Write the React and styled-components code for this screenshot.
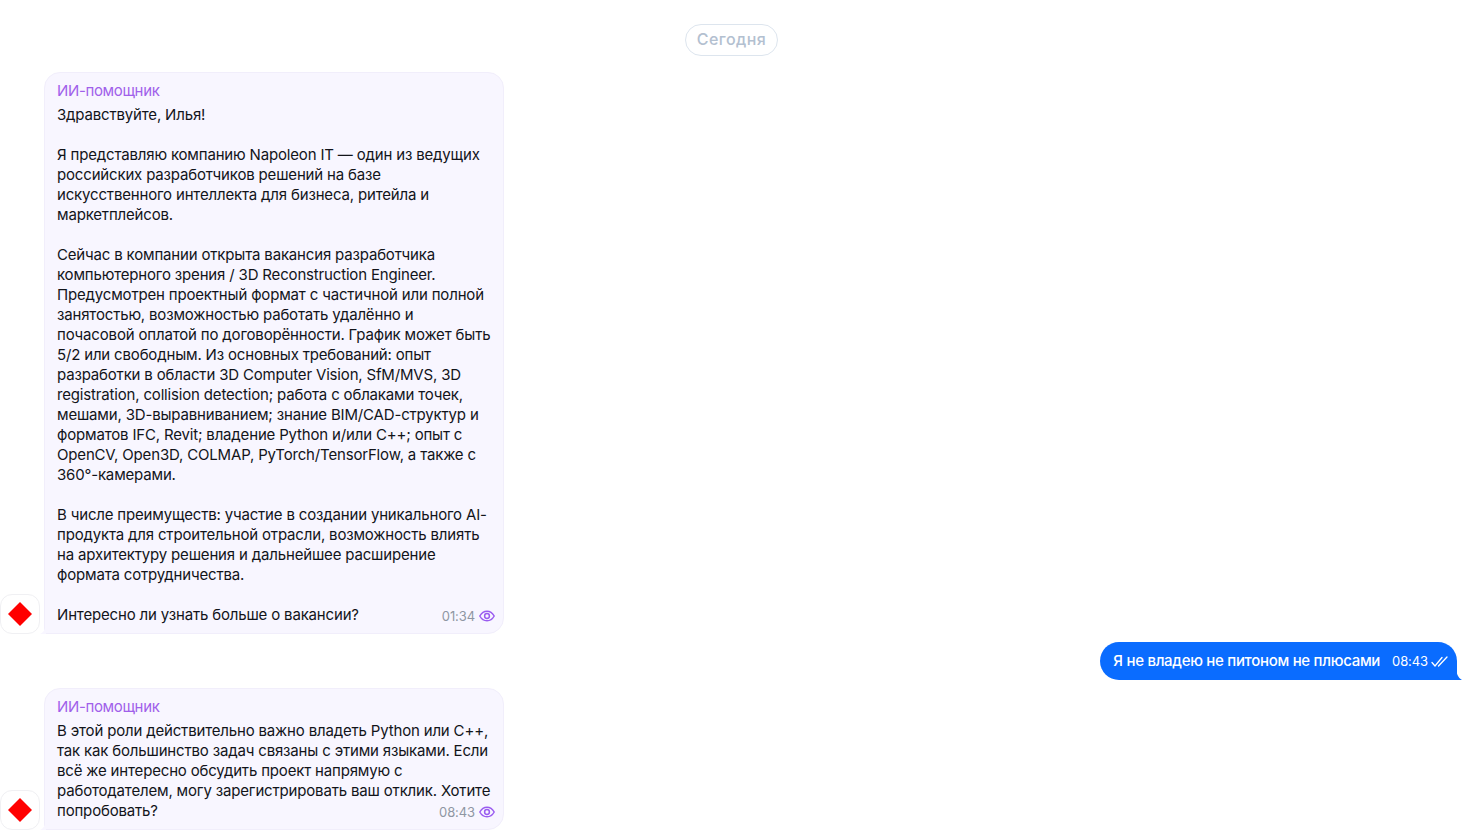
import React from 'react';
import styled, { createGlobalStyle } from 'styled-components';

const GlobalStyle = createGlobalStyle`
  html, body {
    margin: 0;
    background: #fff;
    font-family: Inter, "Noto Sans", sans-serif;
    overflow: hidden;
  }
`;

const Chat = styled.div`
  display: flex;
  flex-direction: column;
  width: 1467px;
  height: 838px;
  padding-top: 24px;
  box-sizing: border-box;
`;

const DateRow = styled.div`
  display: flex;
  justify-content: center;
  padding-right: 4px;
  margin-bottom: 16px;
`;

const DatePill = styled.div`
  height: 32px;
  box-sizing: border-box;
  padding: 0 11px 2px;
  display: flex;
  align-items: center;
  border: 1px solid #dde5ee;
  border-radius: 16px;
  color: #b3c0d0;
  font-size: 16px;
  font-weight: 500;
  letter-spacing: 0.45px;
`;

const IncomingRow = styled.div`
  display: flex;
  align-items: flex-end;
  margin-bottom: ${(p) => p.$gap}px;
`;

const Avatar = styled.div`
  width: 40px;
  height: 40px;
  box-sizing: border-box;
  border: 1px solid #f0f0f3;
  border-radius: 12px;
  display: flex;
  align-items: center;
  justify-content: center;
  background: #fff;
  flex: none;
`;

const Bubble = styled.div`
  position: relative;
  width: 460px;
  margin-left: 4px;
  box-sizing: border-box;
  padding: 8px 8px 8px 12px;
  background: #f8f6ff;
  border: 1px solid #f1eefb;
  border-radius: 16px 16px 16px 0;
`;

const Tail = styled.svg`
  position: absolute;
  left: -5px;
  bottom: -1px;
`;

const Sender = styled.div`
  color: #a060ea;
  font-size: 15px;
  line-height: 20px;
  margin-bottom: 4px;
  letter-spacing: -0.35px;
`;

const Text = styled.div`
  color: #12141a;
  font-size: 15px;
  line-height: 20px;
  white-space: pre;
  letter-spacing: -0.17px;
`;

const Footer = styled.div`
  display: flex;
  justify-content: space-between;
  align-items: flex-end;
`;

const Meta = styled.div`
  display: flex;
  align-items: center;
  gap: 4px;
  color: #8f96a3;
  font-size: 13px;
  line-height: 18px;
  letter-spacing: -0.1px;
`;

const OutgoingRow = styled.div`
  display: flex;
  justify-content: flex-end;
  padding-right: 10px;
  margin-bottom: 8px;
`;

const OutBubble = styled.div`
  position: relative;
  height: 38px;
  box-sizing: border-box;
  padding: 0 9px 2px 13px;
  display: flex;
  align-items: center;
  gap: 12px;
  background: #0a6cff;
  color: #fff;
  border-radius: 19px 19px 0 19px;
  font-size: 15px;
  font-weight: 500;
  letter-spacing: -0.3px;
`;

const OutTail = styled.svg`
  position: absolute;
  right: -5px;
  bottom: 0;
`;

const OutMeta = styled.span`
  display: flex;
  align-items: center;
  gap: 3px;
  padding-top: 2px;
  font-size: 13px;
  font-weight: 400;
  letter-spacing: -0.1px;
`;

const first = `Здравствуйте, Илья!

Я представляю компанию Napoleon IT — один из ведущих
российских разработчиков решений на базе
искусственного интеллекта для бизнеса, ритейла и
маркетплейсов.

Сейчас в компании открыта вакансия разработчика
компьютерного зрения / 3D Reconstruction Engineer.
Предусмотрен проектный формат с частичной или полной
занятостью, возможностью работать удалённо и
почасовой оплатой по договорённости. График может быть
5/2 или свободным. Из основных требований: опыт
разработки в области 3D Computer Vision, SfM/MVS, 3D
registration, collision detection; работа с облаками точек,
мешами, 3D-выравниванием; знание BIM/CAD-структур и
форматов IFC, Revit; владение Python и/или C++; опыт с
OpenCV, Open3D, COLMAP, PyTorch/TensorFlow, а также с
360°-камерами.

В числе преимуществ: участие в создании уникального AI-
продукта для строительной отрасли, возможность влиять
на архитектуру решения и дальнейшее расширение
формата сотрудничества.

`;

const second = `В этой роли действительно важно владеть Python или C++,
так как большинство задач связаны с этими языками. Если
всё же интересно обсудить проект напрямую с
работодателем, могу зарегистрировать ваш отклик. Хотите`;

function Diamond() {
  return (
    <svg width="26" height="26" viewBox="0 0 26 26">
      <path d="M13 1 L25 13 L13 25 L1 13 Z" fill="#ff0000" />
    </svg>
  );
}

function Eye() {
  return (
    <svg width="16" height="12" viewBox="0 0 16 12" fill="none" stroke="#9a5cf0" strokeWidth="1.5">
      <path d="M0.8 6 C2.6 2.8 5 1.2 8 1.2 C11 1.2 13.4 2.8 15.2 6 C13.4 9.2 11 10.8 8 10.8 C5 10.8 2.6 9.2 0.8 6 Z" />
      <circle cx="8" cy="6" r="2.4" />
    </svg>
  );
}

function DoubleCheck() {
  return (
    <svg width="17" height="11" viewBox="0 0 17 11" fill="none" stroke="#fff" strokeWidth="1.3" strokeLinecap="round">
      <path d="M1 6.5 L4 10 L11 1.5" />
      <path d="M7.5 10 L16 1" />
    </svg>
  );
}

function IncomingMessage({ text, lastLine, time, gap }) {
  return (
    <IncomingRow $gap={gap}>
      <Avatar>
        <Diamond />
      </Avatar>
      <Bubble>
        <Tail width="6" height="12" viewBox="0 0 6 12">
          <path d="M6 0 C6 6 4 10 0 12 L6 12 Z" fill="#f8f6ff" />
        </Tail>
        <Sender>ИИ-помощник</Sender>
        <Text>{text}</Text>
        <Footer>
          <Text>{lastLine}</Text>
          <Meta>
            {time}
            <Eye />
          </Meta>
        </Footer>
      </Bubble>
    </IncomingRow>
  );
}

export default function App() {
  return (
    <>
      <GlobalStyle />
      <Chat>
        <DateRow>
          <DatePill>Сегодня</DatePill>
        </DateRow>
        <IncomingMessage
          text={first}
          lastLine="Интересно ли узнать больше о вакансии?"
          time="01:34"
          gap={8}
        />
        <OutgoingRow>
          <OutBubble>
            Я не владею не питоном не плюсами
            <OutMeta>
              08:43
              <DoubleCheck />
            </OutMeta>
            <OutTail width="6" height="14" viewBox="0 0 6 14">
              <path d="M0 0 C0 7 2 12 6 14 L0 14 Z" fill="#0a6cff" />
            </OutTail>
          </OutBubble>
        </OutgoingRow>
        <IncomingMessage
          text={second}
          lastLine="попробовать?"
          time="08:43"
          gap={0}
        />
      </Chat>
    </>
  );
}
